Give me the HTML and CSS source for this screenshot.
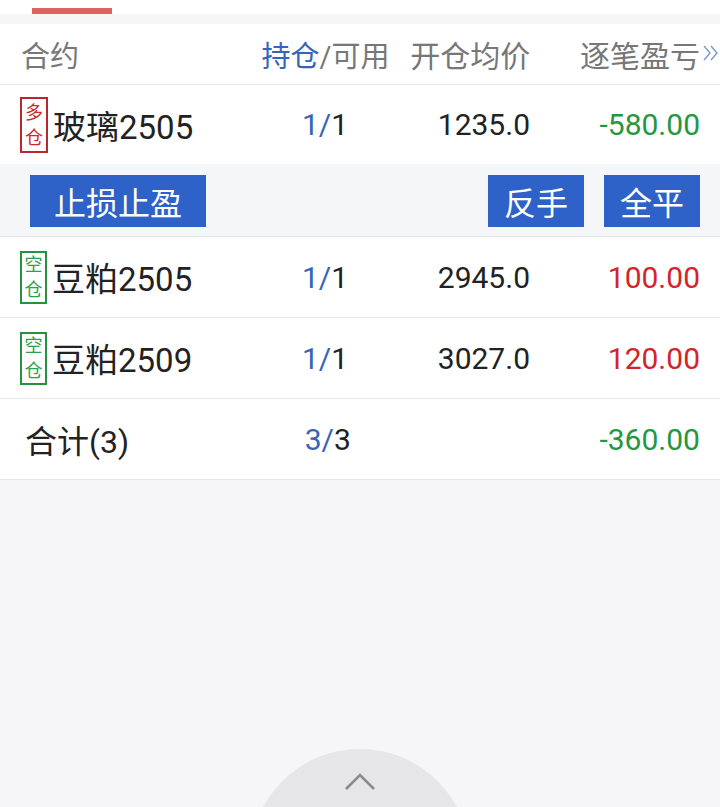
FILE: index.html
```html
<!DOCTYPE html>
<html lang="zh-CN">
<head>
  <meta charset="UTF-8" />
  <meta name="viewport" content="width=device-width, initial-scale=1.0" />
  <title>持仓</title>
  <link rel="stylesheet" href="styles.css">
</head>
<body>
  <div class="tabs">
    <span class="tab-line"></span>
  </div>

  <div class="table">
    <div class="row head">
      <div class="c-name">合约</div>
      <div class="c-pos"><span class="blue">持仓</span>/可用</div>
      <div class="c-price">开仓均价</div>
      <div class="c-pnl">逐笔盈亏
        <svg class="more" width="18" height="22" viewBox="0 0 18 22">
          <polyline points="2,4 8,11 2,18" fill="none" stroke="#7d98cc" stroke-width="1.4" />
          <polyline points="9,4 15,11 9,18" fill="none" stroke="#7d98cc" stroke-width="1.4" />
        </svg>
      </div>
    </div>

    <div class="row item open">
      <div class="c-name"><span class="tag long">多<br>仓</span>玻璃2505</div>
      <div class="c-pos"><span class="blue">1/</span>1</div>
      <div class="c-price">1235.0</div>
      <div class="c-pnl green">-580.00</div>
    </div>
    <div class="actions">
      <button class="btn wide">止损止盈</button>
      <span class="spacer"></span>
      <button class="btn">反手</button>
      <button class="btn">全平</button>
    </div>

    <div class="row item">
      <div class="c-name"><span class="tag short">空<br>仓</span>豆粕2505</div>
      <div class="c-pos"><span class="blue">1/</span>1</div>
      <div class="c-price">2945.0</div>
      <div class="c-pnl red">100.00</div>
    </div>

    <div class="row item">
      <div class="c-name"><span class="tag short">空<br>仓</span>豆粕2509</div>
      <div class="c-pos"><span class="blue">1/</span>1</div>
      <div class="c-price">3027.0</div>
      <div class="c-pnl red">120.00</div>
    </div>

    <div class="row item total">
      <div class="c-name">合计(3)</div>
      <div class="c-pos"><span class="blue">3/</span>3</div>
      <div class="c-price"></div>
      <div class="c-pnl green">-360.00</div>
    </div>
  </div>

  <div class="scroll-top">
    <div class="circle">
      <svg width="32" height="20" viewBox="0 0 32 20">
        <polyline points="2,18 16,4 30,18" fill="none" stroke="#8a8a8a" stroke-width="2.6" />
      </svg>
    </div>
  </div>
</body>
</html>
```

FILE: styles.css
```css
html, body {
  margin: 0;
  padding: 0;
  height: 100%;
  background: #f6f6f8;
  overflow: hidden;
  font-family: Roboto, "Noto Sans CJK SC", sans-serif;
  color: #222;
}
.tabs {
  height: 14px;
  background: #fff;
  padding-left: 32px;
  display: flex;
  align-items: flex-end;
}
.tab-line {
  width: 80px;
  height: 6px;
  background: #e06162;
}
.table {
  margin-top: 10px;
  background: #fff;
}
.row {
  display: flex;
  align-items: center;
  padding: 0 20px;
  border-bottom: 1px solid #e6e6e8;
  white-space: nowrap;
}
.c-name {
  width: 235px;
  display: flex;
  align-items: center;
}
.c-pos {
  width: 140px;
  display: flex;
  justify-content: center;
}
.c-price {
  width: 135px;
  text-align: right;
}
.c-pnl {
  width: 170px;
  text-align: right;
  position: relative;
}
.head {
  height: 60px;
  font-size: 29px;
  color: #777;
}
.head .c-name {
  padding-left: 1px;
}
.head .c-price {
  font-size: 30px;
}
.head .c-pnl {
  font-size: 30px;
}
.more {
  position: absolute;
  right: -20px;
  top: 10px;
}
.item {
  height: 80px;
  font-size: 30px;
}
.item .c-name {
  font-size: 33px;
}
.open {
  height: 79px;
  border-bottom: none;
}
.total .c-name {
  padding-left: 5px;
  font-size: 32px;
}
.blue {
  color: #3565b8;
}
.green {
  color: #24973f;
}
.red {
  color: #d4232b;
}
.tag {
  box-sizing: border-box;
  width: 28px;
  height: 56px;
  border: 2px solid;
  font-size: 18px;
  line-height: 25px;
  text-align: center;
  margin-right: 5px;
  display: flex;
  align-items: center;
  justify-content: center;
}
.tag.long {
  color: #cc2a2a;
  border-color: #b8282c;
}
.tag.short {
  color: #2aa24a;
  border-color: #26913f;
  width: 27px;
  height: 53px;
}
.actions {
  display: flex;
  gap: 20px;
  padding: 11px 20px 9px 30px;
  background: #f5f6f8;
  border-bottom: 1px solid #e6e6e8;
}
.spacer {
  flex: 1;
}
.btn {
  height: 52px;
  width: 96px;
  padding: 0;
  border: none;
  background: #2e62c8;
  color: #fff;
  font-family: inherit;
  font-size: 32px;
}
.btn.wide {
  width: 176px;
}
.scroll-top {
  position: absolute;
  left: 250px;
  bottom: 0;
  width: 220px;
  height: 58px;
  overflow: hidden;
}
.circle {
  width: 220px;
  height: 220px;
  border-radius: 50%;
  background: #e6e6e8;
  display: flex;
  justify-content: center;
  padding-top: 22px;
  box-sizing: border-box;
}
```
